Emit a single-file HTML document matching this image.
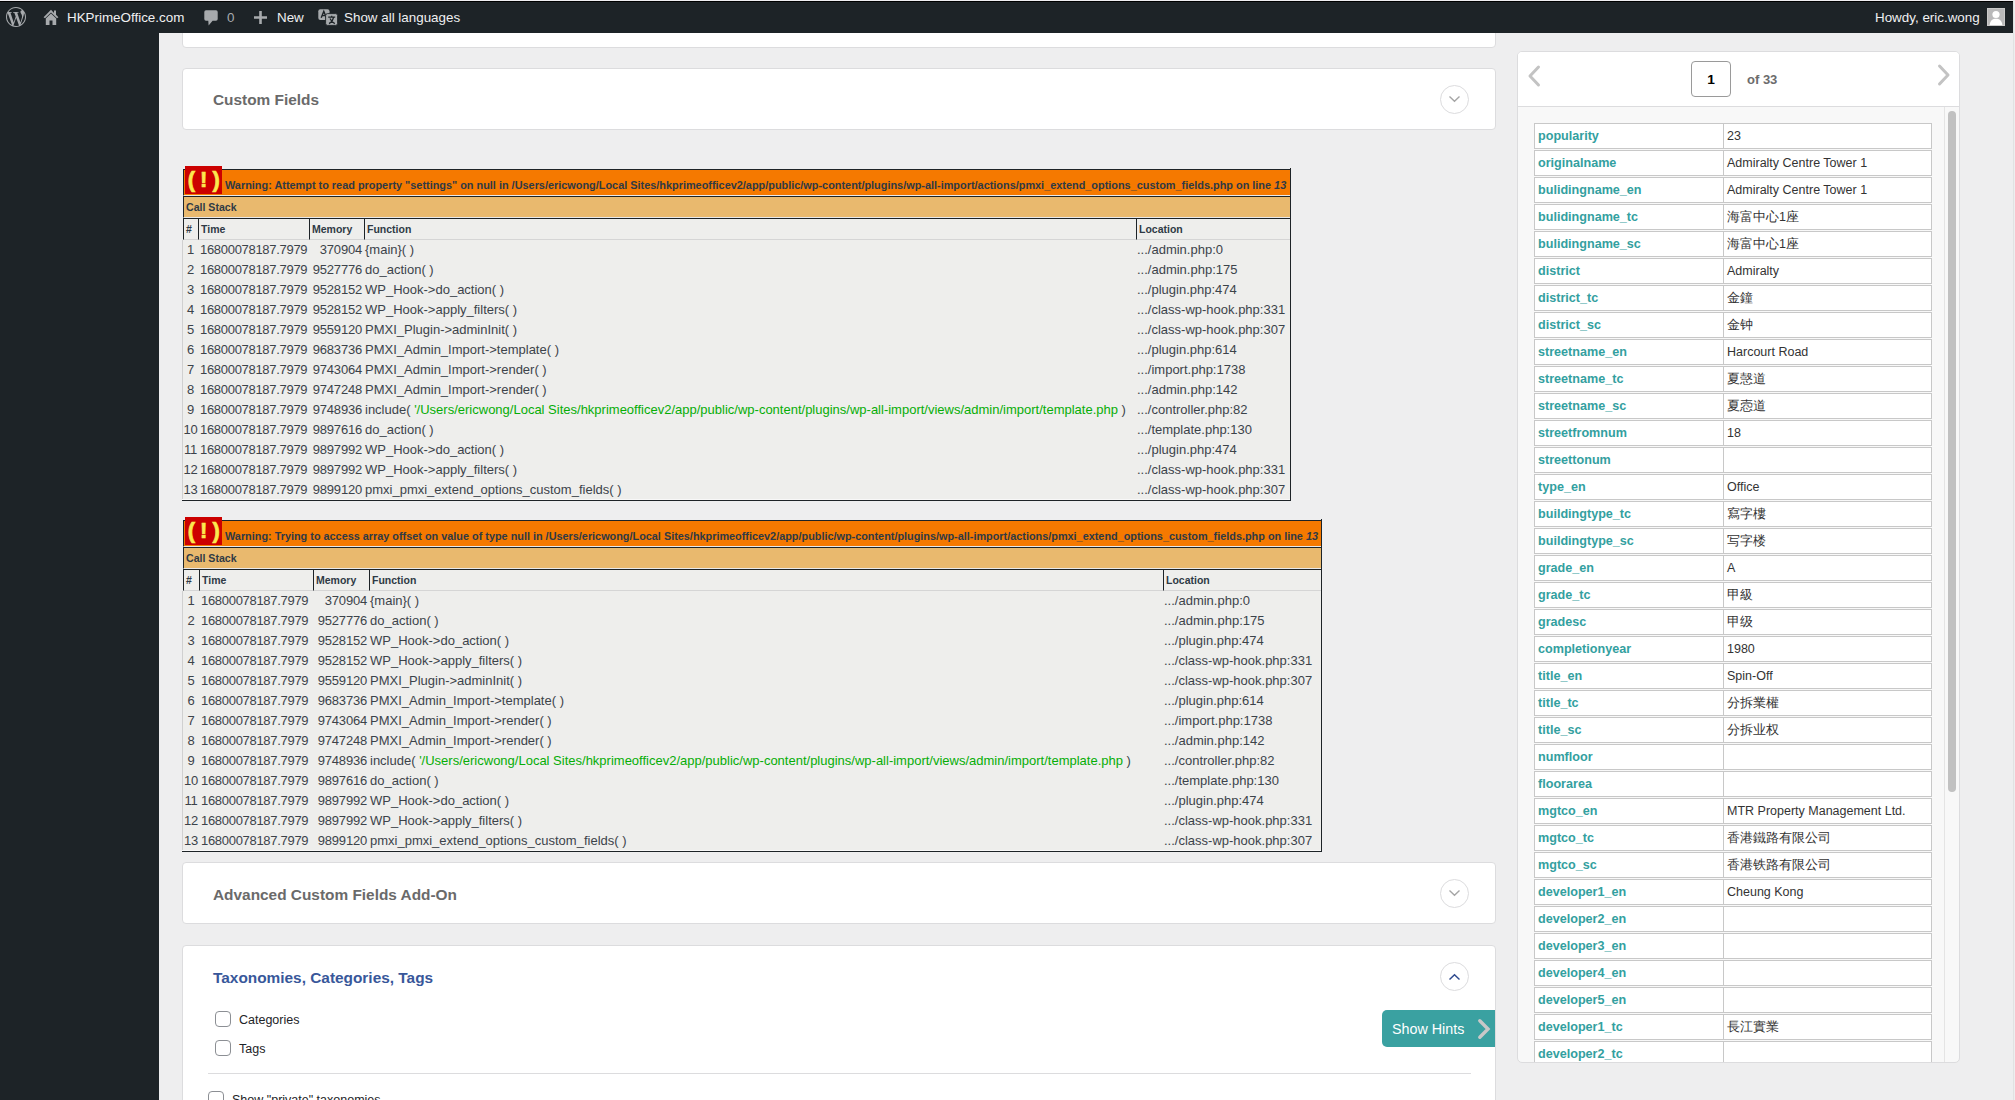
<!DOCTYPE html>
<html><head><meta charset='utf-8'><style>
*{margin:0;padding:0;box-sizing:border-box}
html,body{width:2015px;height:1100px;overflow:hidden}
body{background:#eeeeef;font-family:"Liberation Sans",sans-serif;position:relative;color:#3c434a}
.a{position:absolute}
svg{position:absolute;overflow:visible}
#topline{left:0;top:0;width:2015px;height:1px;background:#efedf1;z-index:10}
#blackline{left:0;top:1px;width:2013px;height:1px;background:#000;z-index:10}
#bar{left:0;top:2px;width:2013px;height:31px;background:#1d2327;z-index:10}
#rstrip{left:2013px;top:1px;width:1px;height:1099px;background:#e2e2e2;z-index:10}
#side{left:0;top:33px;width:159px;height:1067px;background:#1d2327}
.bt{position:absolute;color:#f0f0f1;font-size:13.4px;line-height:17px;white-space:nowrap;z-index:11}
.ic{z-index:11}
.box{position:absolute;left:182px;width:1314px;background:#fff;border:1px solid #dcdcde;border-radius:4px}
.ttl{position:absolute;left:30px;font-weight:bold;font-size:15.4px;line-height:20px;color:#6a6a6a;white-space:nowrap}
.circ{position:absolute;width:29px;height:29px;border:1px solid #dcdcde;border-radius:50%}
/* xdebug */
.xt{position:absolute}
.xt div,.xt span{position:absolute;white-space:nowrap}
.xo{left:0;top:0;right:0;height:27px;background:#f57900;border-top:1px solid #1d2327;border-left:1px solid #1d2327;border-bottom:1px solid #e9e9e9}
.xred{top:-3px;width:37px;height:28px;background:#cc0000;color:#fce94f;font-weight:bold;font-size:22px;line-height:28px;text-align:center;letter-spacing:-0.5px;-webkit-text-stroke:0.7px #fce94f}
.xmsg{left:42px;top:6px;font-weight:bold;font-size:10.9px;line-height:20px;color:#2f3a45}
.xmsg i{font-style:italic}
.xline{left:0;right:0;height:1px;background:#1d2327}
.xtan{left:0;right:0;top:28px;height:21px;background:#e9b96e;border-left:1px solid #1d2327;border-bottom:1px solid #e9e9e9;font-weight:bold;font-size:10.6px;line-height:20px;padding:0 0 0 2px;color:#2f3a45}
.xh{top:49px;height:22px;background:#eeeeec;border-left:1px solid #1d2327;border-top:1px solid #1d2327;border-bottom:1px solid #d5d5d5;font-weight:bold;font-size:10.5px;line-height:20px;padding-left:2px;color:#2f3a45}
.xr{left:-1px;right:0;height:20px;background:#eeeeec;border-left:1px solid #d0d0d0;font-size:13px;line-height:20px;color:#3c434a}
.xn{left:0;text-align:center;letter-spacing:-0.3px}
.xtm{left:0;letter-spacing:-0.3px}
.xm{text-align:right;letter-spacing:-0.2px}
.g{position:static!important;color:#06ad06}
.xrb{right:0;top:-1px;width:1px;height:333px;background:#1d2327}
.xbb{left:-1px;right:0;top:331px;height:1px;background:#1d2327}
.xwb{left:-1px;right:0;top:330px;height:1px;background:#f8f8f8}
/* panel */
.pr{position:absolute;left:16px;width:398px;height:26px;background:#fff;border:1px solid #c8c8c8}
.pk{position:absolute;left:3px;top:0;width:185px;height:24px;font-weight:bold;font-size:12.6px;line-height:24px;color:#33a0a0;white-space:nowrap}
.pd{position:absolute;left:188px;top:0;width:1px;height:24px;background:#c8c8c8}
.pv{position:absolute;left:192px;top:0;font-size:12.5px;line-height:24px;color:#333;white-space:nowrap}
.cb{position:absolute;width:16px;height:16px;border:1px solid #8c8f94;border-radius:4px;background:#fff}
.lb{position:absolute;font-size:12.5px;line-height:16px;color:#1d2327;white-space:nowrap}

</style></head><body>
<div class="a" id="topline"></div>
<div class="a" id="blackline"></div>
<div class="a" id="bar"></div>
<div class="a" id="rstrip"></div>
<div class="a" id="side"></div>
<!-- admin bar -->
<svg class="ic" style="left:6px;top:7px" width="20" height="20" viewBox="0 0 24 24"><path fill="#a7aaad" d="M21.469 6.825c.84 1.537 1.318 3.3 1.318 5.175 0 3.979-2.156 7.456-5.363 9.325l3.295-9.527c.615-1.54.82-2.771.82-3.864 0-.405-.026-.78-.07-1.11m-7.981.105c.647-.03 1.232-.105 1.232-.105.582-.075.514-.93-.067-.899 0 0-1.755.135-2.88.135-1.064 0-2.85-.15-2.85-.15-.585-.03-.661.855-.075.885 0 0 .54.061 1.125.09l1.68 4.605-2.37 7.08L5.354 6.9c.649-.03 1.234-.1 1.234-.1.585-.075.516-.93-.065-.896 0 0-1.746.138-2.874.138-.2 0-.438-.008-.69-.015C4.911 3.15 8.235 1.215 12 1.215c2.809 0 5.365 1.072 7.286 2.833-.046-.003-.091-.009-.141-.009-1.06 0-1.812.923-1.812 1.914 0 .89.513 1.643 1.06 2.531.411.72.89 1.643.89 2.977 0 .915-.354 1.994-.821 3.479l-1.075 3.585-3.9-11.61.001.014zM12 22.784c-1.059 0-2.081-.153-3.048-.437l3.237-9.406 3.315 9.087c.024.053.05.101.078.149-1.12.393-2.325.609-3.582.609M1.211 12c0-1.564.336-3.05.935-4.39L7.29 21.709C3.694 19.96 1.212 16.271 1.211 12M12 0C5.385 0 0 5.385 0 12s5.385 12 12 12 12-5.385 12-12S18.615 0 12 0"/></svg>
<svg class="ic" style="left:43px;top:9px" width="16" height="17" viewBox="0 0 16 17"><path fill="#a7aaad" d="M8 0.8 L0.6 8.2 L2 9.3 L8 3.5 L14 9.3 L15.4 8.2 L13 5.8 L13 1.5 L11 1.5 L11 3.9 Z M2.8 9.6 L8 4.6 L13.2 9.6 L13.2 16 L9.5 16 L9.5 11.5 L6.5 11.5 L6.5 16 L2.8 16 Z"/></svg>
<div class="bt" style="left:67px;top:9px">HKPrimeOffice.com</div>
<svg class="ic" style="left:204px;top:10px" width="14" height="16" viewBox="0 0 14 16"><path fill="#a7aaad" d="M2 0.3 H12 A1.7 1.7 0 0 1 13.7 2 V9 A1.7 1.7 0 0 1 12 10.7 H8.6 L4.6 15.6 L4.3 10.7 H2 A1.7 1.7 0 0 1 0.3 9 V2 A1.7 1.7 0 0 1 2 0.3 Z"/></svg>
<div class="bt" style="left:227px;top:9px;color:#a7aaad">0</div>
<svg class="ic" style="left:254px;top:11px" width="13" height="13" viewBox="0 0 13 13"><path fill="#a7aaad" d="M5.2 0 H7.8 V5.2 H13 V7.8 H7.8 V13 H5.2 V7.8 H0 V5.2 H5.2 Z"/></svg>
<div class="bt" style="left:277px;top:9px">New</div>
<svg class="ic" style="left:318px;top:9px" width="20" height="17" viewBox="0 0 20 17"><rect x="0.3" y="0.2" width="11.2" height="10.8" rx="2" fill="#a7aaad"/><path d="M3.2 8.8 L5.8 2.4 L8.4 8.8 M4 6.6 H7.6" stroke="#1d2327" stroke-width="1.4" fill="none"/><rect x="7.6" y="4.6" width="12" height="11.8" rx="2" fill="#a7aaad" stroke="#1d2327" stroke-width="0.9"/><path d="M10.2 8.2 H17.2 M13.7 6.8 V8.2 M11 14.6 C13 13.5 14.8 11.5 15.6 8.4 M12 9.4 C13 11.8 14.8 13.6 16.8 14.6" stroke="#1d2327" stroke-width="1.2" fill="none"/></svg>
<div class="bt" style="left:344px;top:9px">Show all languages</div>
<div class="bt" style="left:1875px;top:9px">Howdy, eric.wong</div>
<div class="a ic" style="left:1987px;top:8px;width:18px;height:18px;background:#b9b9ba;border:1px solid #cacaca;overflow:hidden"><svg style="left:-1px;top:-1px" width="18" height="18" viewBox="0 0 18 18"><circle cx="9" cy="6.5" r="3.6" fill="#fff"/><path d="M2.5 18 C3 12.5 5.5 10.8 9 10.8 C12.5 10.8 15 12.5 15.5 18 Z" fill="#fff"/></svg></div>

<!-- boxes -->
<div class="box" style="top:20px;height:28px"></div>
<div class="box" style="top:68px;height:62px">
  <div class="ttl" style="top:21px">Custom Fields</div>
  <div class="circ" style="left:1257px;top:16px"><svg style="left:8px;top:10px" width="11" height="6" viewBox="0 0 11 6"><path d="M0.5 0.5 L5.5 5.2 L10.5 0.5" stroke="#a5a5a5" stroke-width="1.4" fill="none"/></svg></div>
</div>
<div class='xt' style='left:183px;top:169px;width:1108px;height:332px'>
<div class='xo'></div>
<div class='xred' style='left:2px'>( ! )</div>
<div class='xmsg' style='font-size:10.9px'>Warning: Attempt to read property &quot;settings&quot; on null in /Users/ericwong/Local Sites/hkprimeofficev2/app/public/wp-content/plugins/wp-all-import/actions/pmxi_extend_options_custom_fields.php on line <i>13</i></div>
<div class='xline' style='top:27px'></div>
<div class='xtan'>Call Stack</div>
<div class='xh' style='left:0px;width:15px'>#</div>
<div class='xh' style='left:15px;width:111px'>Time</div>
<div class='xh' style='left:126px;width:55px'>Memory</div>
<div class='xh' style='left:181px;width:772px'>Function</div>
<div class='xh' style='left:953px;width:155px'>Location</div>
<div class='xhb'></div>
<div class='xr' style='top:71px'><span class='xn' style='width:15px'>1</span><span class='xtm' style='left:17px;width:111px'>16800078187.7979</span><span class='xm' style='left:126px;width:53px'>370904</span><span class='xf' style='left:182px'>{main}( )</span><span class='xl' style='left:954px'>.../admin.php:0</span></div>
<div class='xr' style='top:91px'><span class='xn' style='width:15px'>2</span><span class='xtm' style='left:17px;width:111px'>16800078187.7979</span><span class='xm' style='left:126px;width:53px'>9527776</span><span class='xf' style='left:182px'>do_action( )</span><span class='xl' style='left:954px'>.../admin.php:175</span></div>
<div class='xr' style='top:111px'><span class='xn' style='width:15px'>3</span><span class='xtm' style='left:17px;width:111px'>16800078187.7979</span><span class='xm' style='left:126px;width:53px'>9528152</span><span class='xf' style='left:182px'>WP_Hook-&gt;do_action( )</span><span class='xl' style='left:954px'>.../plugin.php:474</span></div>
<div class='xr' style='top:131px'><span class='xn' style='width:15px'>4</span><span class='xtm' style='left:17px;width:111px'>16800078187.7979</span><span class='xm' style='left:126px;width:53px'>9528152</span><span class='xf' style='left:182px'>WP_Hook-&gt;apply_filters( )</span><span class='xl' style='left:954px'>.../class-wp-hook.php:331</span></div>
<div class='xr' style='top:151px'><span class='xn' style='width:15px'>5</span><span class='xtm' style='left:17px;width:111px'>16800078187.7979</span><span class='xm' style='left:126px;width:53px'>9559120</span><span class='xf' style='left:182px'>PMXI_Plugin-&gt;adminInit( )</span><span class='xl' style='left:954px'>.../class-wp-hook.php:307</span></div>
<div class='xr' style='top:171px'><span class='xn' style='width:15px'>6</span><span class='xtm' style='left:17px;width:111px'>16800078187.7979</span><span class='xm' style='left:126px;width:53px'>9683736</span><span class='xf' style='left:182px'>PMXI_Admin_Import-&gt;template( )</span><span class='xl' style='left:954px'>.../plugin.php:614</span></div>
<div class='xr' style='top:191px'><span class='xn' style='width:15px'>7</span><span class='xtm' style='left:17px;width:111px'>16800078187.7979</span><span class='xm' style='left:126px;width:53px'>9743064</span><span class='xf' style='left:182px'>PMXI_Admin_Import-&gt;render( )</span><span class='xl' style='left:954px'>.../import.php:1738</span></div>
<div class='xr' style='top:211px'><span class='xn' style='width:15px'>8</span><span class='xtm' style='left:17px;width:111px'>16800078187.7979</span><span class='xm' style='left:126px;width:53px'>9747248</span><span class='xf' style='left:182px'>PMXI_Admin_Import-&gt;render( )</span><span class='xl' style='left:954px'>.../admin.php:142</span></div>
<div class='xr' style='top:231px'><span class='xn' style='width:15px'>9</span><span class='xtm' style='left:17px;width:111px'>16800078187.7979</span><span class='xm' style='left:126px;width:53px'>9748936</span><span class='xf' style='left:182px'>include( <span class='g'>'/Users/ericwong/Local Sites/hkprimeofficev2/app/public/wp-content/plugins/wp-all-import/views/admin/import/template.php</span> )</span><span class='xl' style='left:954px'>.../controller.php:82</span></div>
<div class='xr' style='top:251px'><span class='xn' style='width:15px'>10</span><span class='xtm' style='left:17px;width:111px'>16800078187.7979</span><span class='xm' style='left:126px;width:53px'>9897616</span><span class='xf' style='left:182px'>do_action( )</span><span class='xl' style='left:954px'>.../template.php:130</span></div>
<div class='xr' style='top:271px'><span class='xn' style='width:15px'>11</span><span class='xtm' style='left:17px;width:111px'>16800078187.7979</span><span class='xm' style='left:126px;width:53px'>9897992</span><span class='xf' style='left:182px'>WP_Hook-&gt;do_action( )</span><span class='xl' style='left:954px'>.../plugin.php:474</span></div>
<div class='xr' style='top:291px'><span class='xn' style='width:15px'>12</span><span class='xtm' style='left:17px;width:111px'>16800078187.7979</span><span class='xm' style='left:126px;width:53px'>9897992</span><span class='xf' style='left:182px'>WP_Hook-&gt;apply_filters( )</span><span class='xl' style='left:954px'>.../class-wp-hook.php:331</span></div>
<div class='xr' style='top:311px'><span class='xn' style='width:15px'>13</span><span class='xtm' style='left:17px;width:111px'>16800078187.7979</span><span class='xm' style='left:126px;width:53px'>9899120</span><span class='xf' style='left:182px'>pmxi_pmxi_extend_options_custom_fields( )</span><span class='xl' style='left:954px'>.../class-wp-hook.php:307</span></div>
<div class='xwb'></div><div class='xbb'></div><div class='xrb'></div>
</div>
<div class='xt' style='left:183px;top:520px;width:1139px;height:332px'>
<div class='xo'></div>
<div class='xred' style='left:2px'>( ! )</div>
<div class='xmsg' style='font-size:10.86px'>Warning: Trying to access array offset on value of type null in /Users/ericwong/Local Sites/hkprimeofficev2/app/public/wp-content/plugins/wp-all-import/actions/pmxi_extend_options_custom_fields.php on line <i>13</i></div>
<div class='xline' style='top:27px'></div>
<div class='xtan'>Call Stack</div>
<div class='xh' style='left:0px;width:16px'>#</div>
<div class='xh' style='left:16px;width:114px'>Time</div>
<div class='xh' style='left:130px;width:56px'>Memory</div>
<div class='xh' style='left:186px;width:794px'>Function</div>
<div class='xh' style='left:980px;width:159px'>Location</div>
<div class='xhb'></div>
<div class='xr' style='top:71px'><span class='xn' style='width:16px'>1</span><span class='xtm' style='left:18px;width:114px'>16800078187.7979</span><span class='xm' style='left:130px;width:54px'>370904</span><span class='xf' style='left:187px'>{main}( )</span><span class='xl' style='left:981px'>.../admin.php:0</span></div>
<div class='xr' style='top:91px'><span class='xn' style='width:16px'>2</span><span class='xtm' style='left:18px;width:114px'>16800078187.7979</span><span class='xm' style='left:130px;width:54px'>9527776</span><span class='xf' style='left:187px'>do_action( )</span><span class='xl' style='left:981px'>.../admin.php:175</span></div>
<div class='xr' style='top:111px'><span class='xn' style='width:16px'>3</span><span class='xtm' style='left:18px;width:114px'>16800078187.7979</span><span class='xm' style='left:130px;width:54px'>9528152</span><span class='xf' style='left:187px'>WP_Hook-&gt;do_action( )</span><span class='xl' style='left:981px'>.../plugin.php:474</span></div>
<div class='xr' style='top:131px'><span class='xn' style='width:16px'>4</span><span class='xtm' style='left:18px;width:114px'>16800078187.7979</span><span class='xm' style='left:130px;width:54px'>9528152</span><span class='xf' style='left:187px'>WP_Hook-&gt;apply_filters( )</span><span class='xl' style='left:981px'>.../class-wp-hook.php:331</span></div>
<div class='xr' style='top:151px'><span class='xn' style='width:16px'>5</span><span class='xtm' style='left:18px;width:114px'>16800078187.7979</span><span class='xm' style='left:130px;width:54px'>9559120</span><span class='xf' style='left:187px'>PMXI_Plugin-&gt;adminInit( )</span><span class='xl' style='left:981px'>.../class-wp-hook.php:307</span></div>
<div class='xr' style='top:171px'><span class='xn' style='width:16px'>6</span><span class='xtm' style='left:18px;width:114px'>16800078187.7979</span><span class='xm' style='left:130px;width:54px'>9683736</span><span class='xf' style='left:187px'>PMXI_Admin_Import-&gt;template( )</span><span class='xl' style='left:981px'>.../plugin.php:614</span></div>
<div class='xr' style='top:191px'><span class='xn' style='width:16px'>7</span><span class='xtm' style='left:18px;width:114px'>16800078187.7979</span><span class='xm' style='left:130px;width:54px'>9743064</span><span class='xf' style='left:187px'>PMXI_Admin_Import-&gt;render( )</span><span class='xl' style='left:981px'>.../import.php:1738</span></div>
<div class='xr' style='top:211px'><span class='xn' style='width:16px'>8</span><span class='xtm' style='left:18px;width:114px'>16800078187.7979</span><span class='xm' style='left:130px;width:54px'>9747248</span><span class='xf' style='left:187px'>PMXI_Admin_Import-&gt;render( )</span><span class='xl' style='left:981px'>.../admin.php:142</span></div>
<div class='xr' style='top:231px'><span class='xn' style='width:16px'>9</span><span class='xtm' style='left:18px;width:114px'>16800078187.7979</span><span class='xm' style='left:130px;width:54px'>9748936</span><span class='xf' style='left:187px'>include( <span class='g'>'/Users/ericwong/Local Sites/hkprimeofficev2/app/public/wp-content/plugins/wp-all-import/views/admin/import/template.php</span> )</span><span class='xl' style='left:981px'>.../controller.php:82</span></div>
<div class='xr' style='top:251px'><span class='xn' style='width:16px'>10</span><span class='xtm' style='left:18px;width:114px'>16800078187.7979</span><span class='xm' style='left:130px;width:54px'>9897616</span><span class='xf' style='left:187px'>do_action( )</span><span class='xl' style='left:981px'>.../template.php:130</span></div>
<div class='xr' style='top:271px'><span class='xn' style='width:16px'>11</span><span class='xtm' style='left:18px;width:114px'>16800078187.7979</span><span class='xm' style='left:130px;width:54px'>9897992</span><span class='xf' style='left:187px'>WP_Hook-&gt;do_action( )</span><span class='xl' style='left:981px'>.../plugin.php:474</span></div>
<div class='xr' style='top:291px'><span class='xn' style='width:16px'>12</span><span class='xtm' style='left:18px;width:114px'>16800078187.7979</span><span class='xm' style='left:130px;width:54px'>9897992</span><span class='xf' style='left:187px'>WP_Hook-&gt;apply_filters( )</span><span class='xl' style='left:981px'>.../class-wp-hook.php:331</span></div>
<div class='xr' style='top:311px'><span class='xn' style='width:16px'>13</span><span class='xtm' style='left:18px;width:114px'>16800078187.7979</span><span class='xm' style='left:130px;width:54px'>9899120</span><span class='xf' style='left:187px'>pmxi_pmxi_extend_options_custom_fields( )</span><span class='xl' style='left:981px'>.../class-wp-hook.php:307</span></div>
<div class='xwb'></div><div class='xbb'></div><div class='xrb'></div>
</div>
<div class="box" style="top:862px;height:62px">
  <div class="ttl" style="top:22px">Advanced Custom Fields Add-On</div>
  <div class="circ" style="left:1257px;top:16px"><svg style="left:8px;top:10px" width="11" height="6" viewBox="0 0 11 6"><path d="M0.5 0.5 L5.5 5.2 L10.5 0.5" stroke="#a5a5a5" stroke-width="1.4" fill="none"/></svg></div>
</div>
<div class="box" style="top:945px;height:200px">
  <div class="ttl" style="top:22px;color:#38579a">Taxonomies, Categories, Tags</div>
  <div class="circ" style="left:1257px;top:16px"><svg style="left:8px;top:11px" width="11" height="6" viewBox="0 0 11 6"><path d="M0.5 5.5 L5.5 0.8 L10.5 5.5" stroke="#2e4a8e" stroke-width="1.5" fill="none"/></svg></div>
  <div class="cb" style="left:32px;top:65px"></div>
  <div class="lb" style="left:56px;top:66px">Categories</div>
  <div class="cb" style="left:32px;top:94px"></div>
  <div class="lb" style="left:56px;top:95px">Tags</div>
  <div class="a" style="left:25px;top:127px;width:1263px;height:1px;background:#dcdcde"></div>
  <div class="cb" style="left:25px;top:145px"></div>
  <div class="lb" style="left:49px;top:146px">Show "private" taxonomies</div>
  <div class="a" style="left:1199px;top:64px;width:113px;height:37px;background:#3aa1a1;border-radius:5px 0 0 5px"></div>
  <div class="lb" style="left:1209px;top:74px;font-size:14.3px;line-height:18px;color:#fff">Show Hints</div>
  <svg style="left:1295px;top:73px" width="12" height="20" viewBox="0 0 12 20"><path d="M1.8 1.8 L10 10 L1.8 18.2" stroke="#c8c8c8" stroke-width="3.4" stroke-linecap="round" fill="none"/></svg>
</div>

<!-- right panel -->
<div class="a" id="panel" style="left:1517px;top:51px;width:443px;height:1012px;background:#f8f8f8;border:1px solid #dcdcde;border-radius:5px;overflow:hidden">
  <div class="a" style="left:0;top:0;width:441px;height:55px;background:#fff;border-bottom:1px solid #dcdcde"></div>
  <svg style="left:10px;top:13px" width="12" height="22" viewBox="0 0 12 22"><path d="M10.5 2 L2 11 L10.5 20" stroke="#c3c3c3" stroke-width="3" stroke-linecap="round" stroke-linejoin="round" fill="none"/></svg>
  <svg style="left:420px;top:12px" width="12" height="22" viewBox="0 0 12 22"><path d="M1.5 2 L10 11 L1.5 20" stroke="#c3c3c3" stroke-width="3" stroke-linecap="round" stroke-linejoin="round" fill="none"/></svg>
  <div class="a" style="left:173px;top:9px;width:40px;height:36px;border:1px solid #9a9a9a;border-radius:4px;background:#fff"></div>
  <div class="a" style="left:173px;top:19px;width:40px;text-align:center;font-weight:bold;font-size:13.7px;line-height:18px;color:#000">1</div>
  <div class="a" style="left:229px;top:19px;font-weight:bold;font-size:13px;line-height:18px;color:#6c6c6c;white-space:nowrap">of 33</div>
  <div class="a" style="left:426px;top:55px;width:1px;height:960px;background:#e4e4e4"></div>
  <div class="a" style="left:430px;top:59px;width:8px;height:681px;background:#c1c1c1;border-radius:4px"></div>
  <div class='pr' style='top:71px'><div class='pk'>popularity</div><div class='pd'></div><div class='pv'>23</div></div>
<div class='pr' style='top:98px'><div class='pk'>originalname</div><div class='pd'></div><div class='pv'>Admiralty Centre Tower 1</div></div>
<div class='pr' style='top:125px'><div class='pk'>bulidingname_en</div><div class='pd'></div><div class='pv'>Admiralty Centre Tower 1</div></div>
<div class='pr' style='top:152px'><div class='pk'>bulidingname_tc</div><div class='pd'></div><div class='pv'>海富中心1座</div></div>
<div class='pr' style='top:179px'><div class='pk'>bulidingname_sc</div><div class='pd'></div><div class='pv'>海富中心1座</div></div>
<div class='pr' style='top:206px'><div class='pk'>district</div><div class='pd'></div><div class='pv'>Admiralty</div></div>
<div class='pr' style='top:233px'><div class='pk'>district_tc</div><div class='pd'></div><div class='pv'>金鐘</div></div>
<div class='pr' style='top:260px'><div class='pk'>district_sc</div><div class='pd'></div><div class='pv'>金钟</div></div>
<div class='pr' style='top:287px'><div class='pk'>streetname_en</div><div class='pd'></div><div class='pv'>Harcourt Road</div></div>
<div class='pr' style='top:314px'><div class='pk'>streetname_tc</div><div class='pd'></div><div class='pv'>夏愨道</div></div>
<div class='pr' style='top:341px'><div class='pk'>streetname_sc</div><div class='pd'></div><div class='pv'>夏悫道</div></div>
<div class='pr' style='top:368px'><div class='pk'>streetfromnum</div><div class='pd'></div><div class='pv'>18</div></div>
<div class='pr' style='top:395px'><div class='pk'>streettonum</div><div class='pd'></div><div class='pv'></div></div>
<div class='pr' style='top:422px'><div class='pk'>type_en</div><div class='pd'></div><div class='pv'>Office</div></div>
<div class='pr' style='top:449px'><div class='pk'>buildingtype_tc</div><div class='pd'></div><div class='pv'>寫字樓</div></div>
<div class='pr' style='top:476px'><div class='pk'>buildingtype_sc</div><div class='pd'></div><div class='pv'>写字楼</div></div>
<div class='pr' style='top:503px'><div class='pk'>grade_en</div><div class='pd'></div><div class='pv'>A</div></div>
<div class='pr' style='top:530px'><div class='pk'>grade_tc</div><div class='pd'></div><div class='pv'>甲級</div></div>
<div class='pr' style='top:557px'><div class='pk'>gradesc</div><div class='pd'></div><div class='pv'>甲级</div></div>
<div class='pr' style='top:584px'><div class='pk'>completionyear</div><div class='pd'></div><div class='pv'>1980</div></div>
<div class='pr' style='top:611px'><div class='pk'>title_en</div><div class='pd'></div><div class='pv'>Spin-Off</div></div>
<div class='pr' style='top:638px'><div class='pk'>title_tc</div><div class='pd'></div><div class='pv'>分拆業權</div></div>
<div class='pr' style='top:665px'><div class='pk'>title_sc</div><div class='pd'></div><div class='pv'>分拆业权</div></div>
<div class='pr' style='top:692px'><div class='pk'>numfloor</div><div class='pd'></div><div class='pv'></div></div>
<div class='pr' style='top:719px'><div class='pk'>floorarea</div><div class='pd'></div><div class='pv'></div></div>
<div class='pr' style='top:746px'><div class='pk'>mgtco_en</div><div class='pd'></div><div class='pv'>MTR Property Management Ltd.</div></div>
<div class='pr' style='top:773px'><div class='pk'>mgtco_tc</div><div class='pd'></div><div class='pv'>香港鐵路有限公司</div></div>
<div class='pr' style='top:800px'><div class='pk'>mgtco_sc</div><div class='pd'></div><div class='pv'>香港铁路有限公司</div></div>
<div class='pr' style='top:827px'><div class='pk'>developer1_en</div><div class='pd'></div><div class='pv'>Cheung Kong</div></div>
<div class='pr' style='top:854px'><div class='pk'>developer2_en</div><div class='pd'></div><div class='pv'></div></div>
<div class='pr' style='top:881px'><div class='pk'>developer3_en</div><div class='pd'></div><div class='pv'></div></div>
<div class='pr' style='top:908px'><div class='pk'>developer4_en</div><div class='pd'></div><div class='pv'></div></div>
<div class='pr' style='top:935px'><div class='pk'>developer5_en</div><div class='pd'></div><div class='pv'></div></div>
<div class='pr' style='top:962px'><div class='pk'>developer1_tc</div><div class='pd'></div><div class='pv'>長江實業</div></div>
<div class='pr' style='top:989px'><div class='pk'>developer2_tc</div><div class='pd'></div><div class='pv'></div></div>
</div>

</body></html>
